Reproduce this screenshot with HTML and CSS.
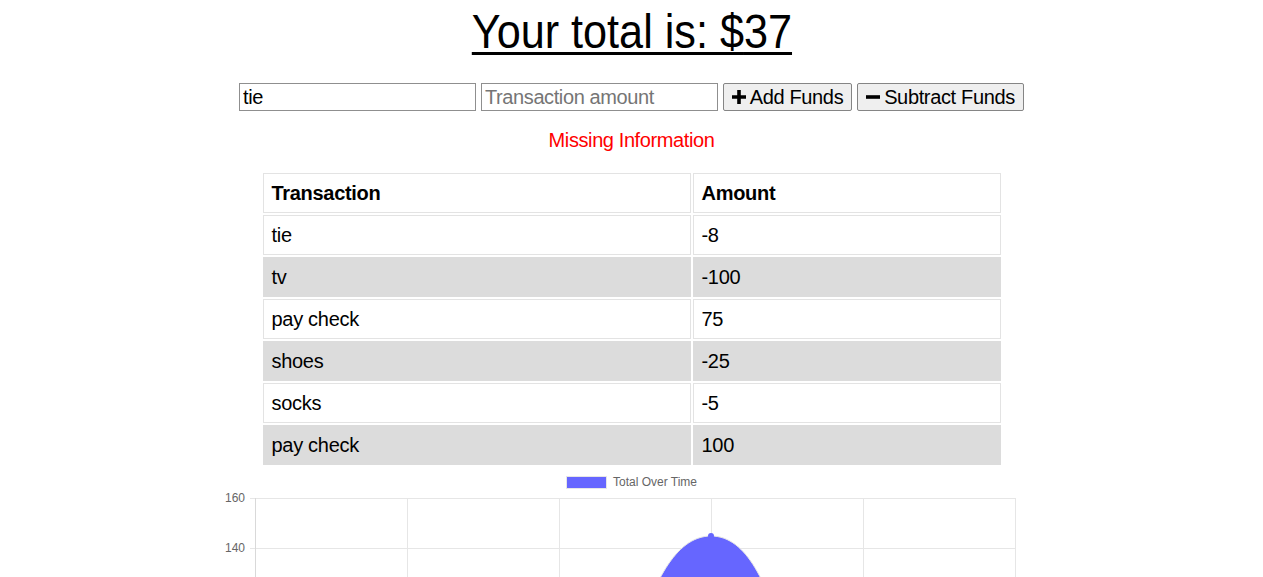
FILE: index.html
```html
<!DOCTYPE html>
<html lang="en">
<head>
<meta charset="utf-8">
<title>Budget Tracker</title>
<link rel="stylesheet" href="styles.css">
</head>
<body>
<div class="page">
  <h1 class="total">Your total is: $<span id="total">37</span></h1>
  <div class="form">
    <input class="field" type="text" value="tie" placeholder="Name of transaction">
    <input class="field" type="number" placeholder="Transaction amount">
    <button class="btn btn-add"><svg class="ico" viewBox="0 0 14 14" width="14" height="14"><path d="M5.2 0h3.6v5.2H14v3.6H8.8V14H5.2V8.8H0V5.2h5.2z" fill="#000"/></svg>Add Funds</button>
    <button class="btn btn-sub"><svg class="ico" viewBox="0 0 14 14" width="14" height="14"><path d="M0 5.2h14v3.6H0z" fill="#000"/></svg>Subtract Funds</button>
  </div>
  <p class="error">Missing Information</p>
  <table class="tx">
    <thead>
      <tr><th class="c1">Transaction</th><th class="c2">Amount</th></tr>
    </thead>
    <tbody>
      <tr><td>tie</td><td>-8</td></tr>
      <tr class="alt"><td>tv</td><td>-100</td></tr>
      <tr><td>pay check</td><td>75</td></tr>
      <tr class="alt"><td>shoes</td><td>-25</td></tr>
      <tr><td>socks</td><td>-5</td></tr>
      <tr class="alt"><td>pay check</td><td>100</td></tr>
    </tbody>
  </table>
  <div class="chart">
    <svg class="chart-svg" width="801" height="130" viewBox="0 0 801 130">
      <rect x="335.5" y="9.5" width="40" height="12" fill="#6666ff" stroke="#e6e6e6" stroke-width="1"/>
      <text class="legend" x="382" y="19">Total Over Time</text>
      <g stroke="#e6e6e6" stroke-width="1">
        <line x1="19" y1="31.5" x2="784" y2="31.5"/>
        <line x1="19" y1="81.5" x2="784" y2="81.5"/>
        <line x1="19" y1="131.5" x2="784" y2="131.5"/>
        <line x1="176.5" y1="31" x2="176.5" y2="130"/>
        <line x1="328.5" y1="31" x2="328.5" y2="130"/>
        <line x1="480.5" y1="31" x2="480.5" y2="130"/>
        <line x1="632.5" y1="31" x2="632.5" y2="130"/>
        <line x1="784.5" y1="31" x2="784.5" y2="130"/>
      </g>
      <line x1="24.5" y1="31" x2="24.5" y2="130" stroke="#d9d9d9" stroke-width="1"/>
      <text class="tick" x="14" y="35" text-anchor="end">160</text>
      <text class="tick" x="14" y="85" text-anchor="end">140</text>
      <path d="M405 170 C 422 120, 443 69, 480 69 C 517 69, 536 120, 553 170 Z" fill="#6666ff" stroke="#e6e6e6" stroke-width="1"/>
      <circle cx="480" cy="69" r="3" fill="#6666ff"/>
    </svg>
  </div>
</div>
</body>
</html>
```

FILE: styles.css
```css
html, body {
  margin: 0;
  padding: 0;
  background: #fff;
}

body {
  font-family: "Liberation Sans", Arial, sans-serif;
  color: #000;
}

.page {
  padding: 4px 8px 0;
  display: flex;
  flex-direction: column;
  align-items: center;
}

.total {
  margin: 0;
  font-size: 48px;
  font-weight: normal;
  line-height: 55px;
  text-decoration: underline;
  text-decoration-thickness: 3px;
  text-underline-offset: 4px;
  transform: scaleX(0.9);
}

.form {
  margin-top: 24px;
  display: flex;
  gap: 5px;
  align-items: center;
  justify-content: center;
}

.field {
  box-sizing: border-box;
  width: 237px;
  height: 28px;
  margin: 0;
  padding: 0 3px;
  font-family: "Liberation Sans", Arial, sans-serif;
  font-size: 20px;
  letter-spacing: -0.4px;
  color: #000;
  border: 1px solid #8f8f8f;
  border-radius: 0;
  background: #fff;
}

.field::placeholder {
  color: #757575;
}

.field::-webkit-outer-spin-button,
.field::-webkit-inner-spin-button {
  -webkit-appearance: none;
  margin: 0;
}

.btn {
  box-sizing: border-box;
  height: 28px;
  margin: 0;
  padding: 0;
  display: flex;
  align-items: center;
  justify-content: center;
  gap: 4px;
  font-family: "Liberation Sans", Arial, sans-serif;
  font-size: 20px;
  letter-spacing: -0.35px;
  color: #000;
  background: #efefef;
  border: 1px solid #858585;
  border-radius: 2px;
}

.btn-add {
  width: 129px;
}

.btn-sub {
  width: 167px;
}

.ico {
  display: block;
  flex: none;
}

.error {
  margin: 18px 0 0;
  font-size: 20px;
  line-height: 23px;
  letter-spacing: -0.4px;
  color: #ff0000;
}

.tx {
  margin-top: 19px;
  width: 742px;
  border-collapse: separate;
  border-spacing: 2px;
  font-size: 20px;
  letter-spacing: -0.3px;
}

.tx th,
.tx td {
  box-sizing: border-box;
  height: 40px;
  padding: 0 8px;
  text-align: left;
  border: 1px solid #e3e3e3;
  line-height: 22px;
}

.tx th {
  font-weight: bold;
}

.tx .c1 {
  width: 428px;
}

.tx tr.alt td {
  background: #dcdcdc;
  border-color: #dcdcdc;
}

.chart {
  display: flex;
  justify-content: center;
}

.chart-svg {
  display: block;
  overflow: visible;
}

.legend {
  font-family: "Liberation Sans", Arial, sans-serif;
  font-size: 12px;
  fill: #666;
}

.tick {
  font-family: "Liberation Sans", Arial, sans-serif;
  font-size: 12px;
  fill: #666;
}
```
